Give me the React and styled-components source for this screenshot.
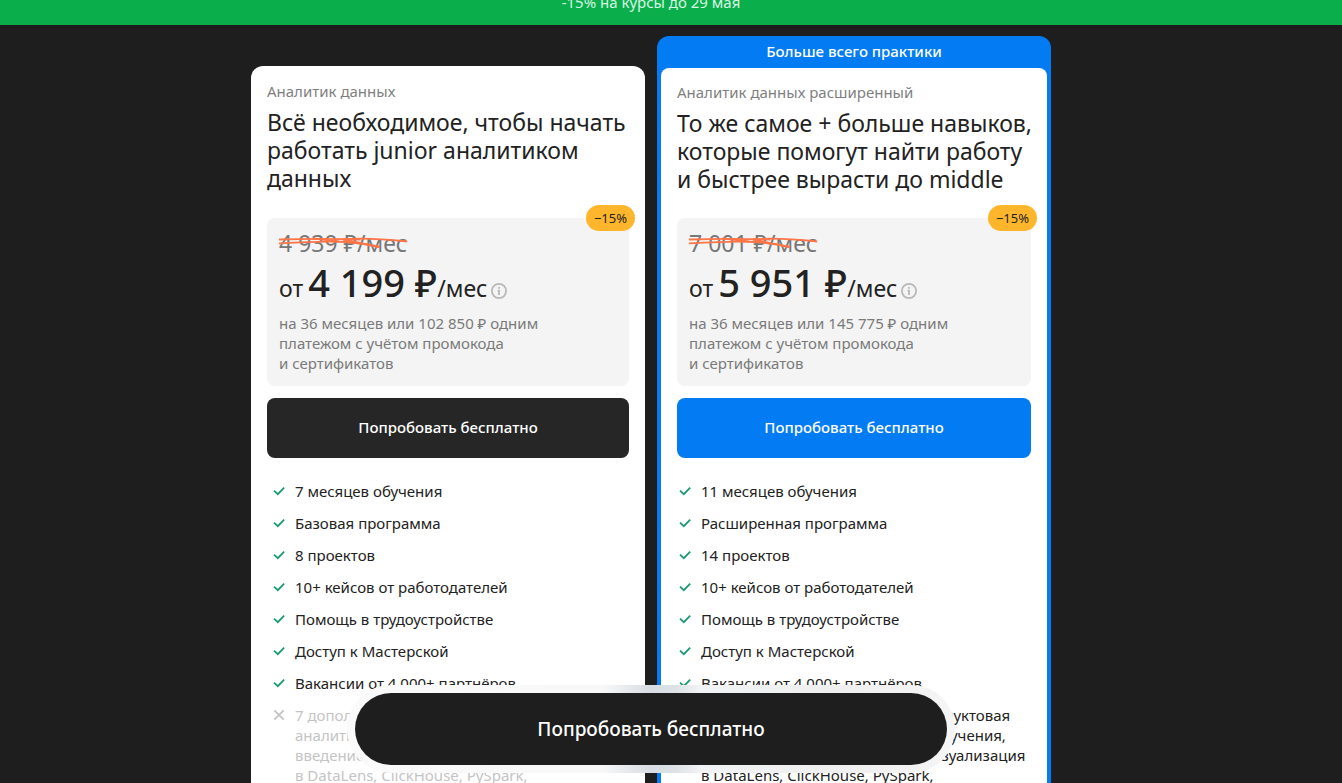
import React from 'react';
import styled, { createGlobalStyle, css } from 'styled-components';

const Global = createGlobalStyle`
  *, *::before, *::after { box-sizing: border-box; }
  html, body { margin: 0; }
  body {
    background: #1e1e1e;
    color: #222;
    font-family: "Noto Sans", "Open Sans", sans-serif;
    font-size: 15px;
    line-height: 20px;
  }
`;

const Page = styled.div`
  height: 100vh;
  overflow: hidden;
  display: flex;
  flex-direction: column;
  background: #1e1e1e;
`;

const Banner = styled.header`
  flex: none;
  height: 25px;
  padding: 0 40px 13px 0;
  display: flex;
  align-items: flex-end;
  justify-content: center;
  overflow: hidden;
  background: #0aae4b;
  color: #d9f4e4;
`;

const Content = styled.main`
  flex: 1;
  min-height: 0;
  padding: 11px 40px 0 0;
  display: flex;
  justify-content: center;
`;

const Plans = styled.div`
  width: 100%;
  max-width: 800px;
  display: grid;
  grid-template-columns: repeat(2, minmax(0, 1fr));
  gap: 12px;
  align-items: start;
`;

const Frame = styled.article`
  border-radius: 12px;
  ${(p) =>
    p.$featured
      ? css`
          background: #027bf3;
          padding: 0 4px 4px;
        `
      : css`
          margin-top: 30px;
        `}
`;

const Ribbon = styled.div`
  height: 32px;
  line-height: 30px;
  text-align: center;
  color: #fff;
  font-weight: 500;
`;

const Card = styled.div`
  background: #fff;
  border-radius: ${(p) => (p.$featured ? 8 : 12)}px;
  padding: ${(p) => (p.$featured ? 14 : 15)}px 16px 24px;
`;

const Heading = styled.div`
  height: ${(p) => (p.$featured ? 136 : 137)}px;
`;

const PlanName = styled.p`
  margin: 0 0 7px;
  color: #7f7f7f;
`;

const Title = styled.h2`
  margin: 0;
  font-size: 23px;
  line-height: 28px;
  font-weight: 400;
  white-space: nowrap;
`;

const PriceBox = styled.section`
  position: relative;
  background: #f4f4f4;
  border-radius: 8px;
  padding: 12px 12px 13px;
`;

const Discount = styled.span`
  position: absolute;
  top: -13px;
  right: -6px;
  padding: 0 8px;
  line-height: 26px;
  border-radius: 13px;
  background: #ffb62c;
  font-size: 13px;
`;

const OldPrice = styled.span`
  position: relative;
  display: block;
  width: fit-content;
  height: 28px;
  line-height: 26px;
  font-size: 23px;
  color: #777;
`;

const Scribble = styled.svg`
  position: absolute;
  left: 0;
  top: 5px;
  width: 100%;
  height: 14px;
  overflow: visible;
`;

const Price = styled.div`
  display: flex;
  align-items: baseline;
  height: 48px;
  line-height: 48px;
  font-size: 23px;
  white-space: nowrap;
`;

const Amount = styled.strong`
  margin-left: 5px;
  font-size: 38px;
  font-weight: 500;
`;

const InfoButton = styled.button`
  align-self: flex-start;
  margin: 25px 0 0 4px;
  padding: 0;
  border: 0;
  background: none;
  width: 16px;
  height: 16px;
  cursor: pointer;
  svg { display: block; }
`;

const Terms = styled.p`
  margin: 7px 0 0;
  color: #7a7a7a;
`;

const TryButton = styled.button`
  display: block;
  width: 100%;
  height: 60px;
  margin-top: 12px;
  padding: 0 0 2px;
  border: 0;
  border-radius: 8px;
  background: ${(p) => (p.$featured ? '#027bf3' : '#262626')};
  color: #fff;
  font: inherit;
  font-weight: 500;
  cursor: pointer;
`;

const Features = styled.ul`
  list-style: none;
  margin: 23px 0 0;
  padding: 0 0 0 ${(p) => (p.$featured ? 0 : 4)}px;
  display: grid;
  gap: 12px;
`;

const Feature = styled.li`
  display: flex;
  gap: 8px;
  white-space: nowrap;
  color: ${(p) => (p.$off ? '#c4c4c4' : '#222')};
  svg { flex: none; margin-top: 2px; }
`;

const Floating = styled.div`
  position: fixed;
  left: 0;
  right: 40px;
  bottom: 10px;
  display: flex;
  justify-content: center;
`;

const Halo = styled.div`
  width: 100%;
  max-width: 608px;
  padding: 8px;
  border-radius: 44px;
  background: linear-gradient(
    90deg,
    #fafafa 0%,
    #f8f8f8 42%,
    #e4e7ea 47%,
    #d8dde3 50%,
    #dde2e6 54%,
    #f1f3f4 58%,
    #efefef 80%,
    #f5f5f5 100%
  );
`;

const FloatingButton = styled.button`
  display: block;
  width: 100%;
  height: 72px;
  border: 0;
  border-radius: 36px;
  background: #1e1e1e;
  color: #fff;
  font: inherit;
  font-size: 19px;
  font-weight: 500;
  cursor: pointer;
`;

const Check = () => (
  <svg width="16" height="16" viewBox="0 0 16 16" fill="none" stroke="#1a9e6f" strokeWidth="1.8" aria-hidden="true">
    <path d="M3 7.6 6.8 11.2 13.2 4.6" />
  </svg>
);

const Cross = () => (
  <svg width="16" height="16" viewBox="0 0 16 16" fill="none" stroke="#c4c4c4" strokeWidth="1.8" aria-hidden="true">
    <path d="M3.3 3.3 12.7 12.7M12.7 3.3 3.3 12.7" />
  </svg>
);

const Info = () => (
  <svg width="16" height="16" viewBox="0 0 16 16" fill="none" stroke="#b8b8b8" aria-hidden="true">
    <circle cx="8" cy="8" r="7.1" strokeWidth="1.8" />
    <path d="M8 4V5.8M6.6 7.7H8V12" strokeWidth="1.8" />
  </svg>
);

const Strike = () => (
  <Scribble viewBox="0 0 132 14" preserveAspectRatio="none" fill="none" stroke="#ff7548" strokeWidth="1.8" aria-hidden="true">
    <path d="M0 4.5C30 3.6 50 3.5 84 4.5" />
    <path d="M0 8.3C25 7 50 5.8 68 7S92 9.5 103 12" />
    <path d="M34 3.3 62 6.5" />
    <path d="M66 4.5C80 3 104 3.8 132 6.5" />
    <path d="M66 4 84 9" />
    <path d="M66 4.5 104 12" />
  </Scribble>
);

const extra = [
  '7 дополнительных разделов: продуктовая',
  'аналитика, основы машинного обучения,',
  'введение в Python и Superset, визуализация',
  'в DataLens, ClickHouse, PySpark,',
];

const plans = [
  {
    name: 'Аналитик данных',
    title: ['Всё необходимое, чтобы начать', 'работать junior аналитиком', 'данных'],
    old: '4 939 ₽/мес',
    price: '4 199 ₽',
    total: '102 850',
    features: ['7 месяцев обучения', 'Базовая программа', '8 проектов'],
  },
  {
    name: 'Аналитик данных расширенный',
    title: ['То же самое + больше навыков,', 'которые помогут найти работу', 'и быстрее вырасти до middle'],
    old: '7 001 ₽/мес',
    price: '5 951 ₽',
    total: '145 775',
    features: ['11 месяцев обучения', 'Расширенная программа', '14 проектов'],
    featured: true,
  },
];

const common = [
  '10+ кейсов от работодателей',
  'Помощь в трудоустройстве',
  'Доступ к Мастерской',
  'Вакансии от 4 000+ партнёров',
];

const Lines = ({ lines }) =>
  lines.map((line, i) => (
    <React.Fragment key={line}>
      {i > 0 && <br />}
      {line}
    </React.Fragment>
  ));

function Plan({ plan }) {
  const { featured } = plan;
  return (
    <Frame $featured={featured}>
      {featured && <Ribbon>Больше всего практики</Ribbon>}
      <Card $featured={featured}>
        <Heading $featured={featured}>
          <PlanName>{plan.name}</PlanName>
          <Title><Lines lines={plan.title} /></Title>
        </Heading>
        <PriceBox>
          <Discount>−15%</Discount>
          <OldPrice>{plan.old}<Strike /></OldPrice>
          <Price>
            <span>от</span>
            <Amount>{plan.price}</Amount>
            <span>/мес</span>
            <InfoButton type="button" aria-label="Подробнее о цене"><Info /></InfoButton>
          </Price>
          <Terms>
            <Lines lines={[`на 36 месяцев или ${plan.total} ₽ одним`, 'платежом с учётом промокода', 'и сертификатов']} />
          </Terms>
        </PriceBox>
        <TryButton type="button" $featured={featured}>Попробовать бесплатно</TryButton>
        <Features $featured={featured}>
          {[...plan.features, ...common].map((f) => (
            <Feature key={f}><Check /><span>{f}</span></Feature>
          ))}
          <Feature $off={!featured}>
            {featured ? <Check /> : <Cross />}
            <span><Lines lines={extra} /></span>
          </Feature>
        </Features>
      </Card>
    </Frame>
  );
}

export default function App() {
  return (
    <Page>
      <Global />
      <Banner>-15% на курсы до 29 мая</Banner>
      <Content>
        <Plans>
          {plans.map((plan) => <Plan key={plan.name} plan={plan} />)}
        </Plans>
      </Content>
      <Floating>
        <Halo>
          <FloatingButton type="button">Попробовать бесплатно</FloatingButton>
        </Halo>
      </Floating>
    </Page>
  );
}
